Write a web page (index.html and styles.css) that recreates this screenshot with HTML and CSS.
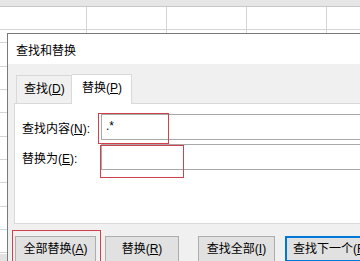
FILE: index.html
```html
<!DOCTYPE html>
<html>

<head lang="zh-CN">
    <meta charset="UTF-8">
    <title>查找和替换</title>
    <link rel="stylesheet" href="styles.css">
</head>

<body>
    <div class="sheet">
        <div class="sheet-head"></div>
        <div class="sheet-tabs"></div>
    </div>

    <div class="dialog">
        <div class="dialog-title">查找和替换</div>
        <div class="dialog-body">
            <div class="tabs">
                <span class="tab">查找(<u>D</u>)</span>
                <span class="tab active">替换(<u>P</u>)</span>
            </div>
            <div class="panel">
                <div class="row">
                    <label class="label">查找内容(<u>N</u>):</label>
                    <div class="input">.*</div>
                </div>
                <div class="row">
                    <label class="label">替换为(<u>E</u>):</label>
                    <div class="input"></div>
                </div>
            </div>
            <div class="buttons">
                <span class="btn btn-all">全部替换(<u>A</u>)</span>
                <span class="btn btn-one">替换(<u>R</u>)</span>
                <span class="btn btn-find">查找全部(<u>I</u>)</span>
                <span class="btn btn-next">查找下一个(<u>F</u>)</span>
            </div>
        </div>
    </div>

    <!-- 红框标注 -->
    <div class="mark mark-1"></div>
    <div class="mark mark-2"></div>
    <div class="mark mark-3"></div>
</body>

</html>
```

FILE: styles.css
```css
* {
    box-sizing: border-box;
}

body {
    margin: 0;
    width: 360px;
    height: 261px;
    overflow: hidden;
    position: relative;
    background: #fff;
    font-family: "Liberation Sans", "Noto Sans CJK SC", sans-serif;
    font-size: 12px;
    color: #000;
}

u {
    text-decoration: underline;
    text-underline-offset: 1px;
}

/* 背景表格 */
.sheet {
    width: 360px;
    height: 261px;
    background:
        linear-gradient(#d4d4d4, #d4d4d4) 0 29px / 100% 1px no-repeat,
        linear-gradient(#d4d4d4, #d4d4d4) 86px 0 / 1px 100% no-repeat,
        linear-gradient(#d4d4d4, #d4d4d4) 166px 0 / 1px 100% no-repeat,
        linear-gradient(#d4d4d4, #d4d4d4) 246px 0 / 1px 100% no-repeat,
        linear-gradient(#d4d4d4, #d4d4d4) 326px 0 / 1px 100% no-repeat,
        repeating-linear-gradient(180deg, transparent 0, transparent 22.33px, #d4d4d4 22.33px, #d4d4d4 23.33px) 0 20px / 100% 240px no-repeat,
        #fff;
}

.sheet-head {
    height: 7px;
    background: #e6e6e6;
    border-bottom: 1px solid #c8c8c8;
}

.sheet-tabs {
    position: absolute;
    left: 0;
    top: 254px;
    width: 8px;
    height: 7px;
    background: #e3e3e3;
}

/* 对话框 */
.dialog {
    position: absolute;
    left: 7px;
    top: 33px;
    width: 370px;
    height: 240px;
    border: 1px solid #7a7a7a;
    background: #f0f0f0;
    display: flex;
    flex-direction: column;
}

.dialog-title {
    height: 30px;
    background: #fff;
    padding-left: 8px;
    line-height: 34px;
    font-size: 12px;
}

.dialog-body {
    padding: 10px 0 0 6px;
}

.tabs {
    display: flex;
    align-items: flex-end;
    height: 29px;
    padding-left: 2px;
}

.tab {
    height: 28px;
    width: 56px;
    padding-left: 7px;
    line-height: 27px;
    white-space: nowrap;
    border: 1px solid #d9d9d9;
    border-bottom: none;
    background: #f0f0f0;
}

.tab.active {
    height: 30px;
    width: 60px;
    margin-bottom: -1px;
    background: #fff;
    border-left: none;
    position: relative;
    z-index: 1;
    padding-left: 10px;
    line-height: 27px;
}

.panel {
    height: 121px;
    background: #fff;
    border: 1px solid #d9d9d9;
    padding: 10px 0 0 7px;
    display: flex;
    flex-direction: column;
    gap: 4px;
}

.row {
    display: flex;
    align-items: center;
}

.label {
    width: 79px;
    flex: none;
    white-space: nowrap;
}

.input {
    flex: 1;
    height: 26px;
    border: 1px solid #a8a8a8;
    padding-left: 4px;
    line-height: 22px;
}

.buttons {
    display: flex;
    padding: 12px 0 0 1px;
}

.btn {
    height: 26px;
    flex: none;
    white-space: nowrap;
    background: #e1e1e1;
    border: 1px solid #adadad;
    text-align: center;
    line-height: 25px;
}

.btn-all {
    width: 81px;
}

.btn-one {
    width: 74px;
    margin-left: 9px;
}

.btn-find {
    width: 77px;
    margin-left: 19px;
}

.btn-next {
    width: 90px;
    margin-left: 10px;
    border: 2px solid #0078d7;
    text-align: left;
    padding-left: 6px;
    line-height: 23px;
}

/* 红框标注 */
.mark {
    position: absolute;
    border: 1px solid #d2404c;
}

.mark-1 {
    left: 98px;
    top: 113px;
    width: 71px;
    height: 31px;
}

.mark-2 {
    left: 100px;
    top: 145px;
    width: 84px;
    height: 33px;
}

.mark-3 {
    left: 12px;
    top: 230px;
    width: 89px;
    height: 40px;
}
```
